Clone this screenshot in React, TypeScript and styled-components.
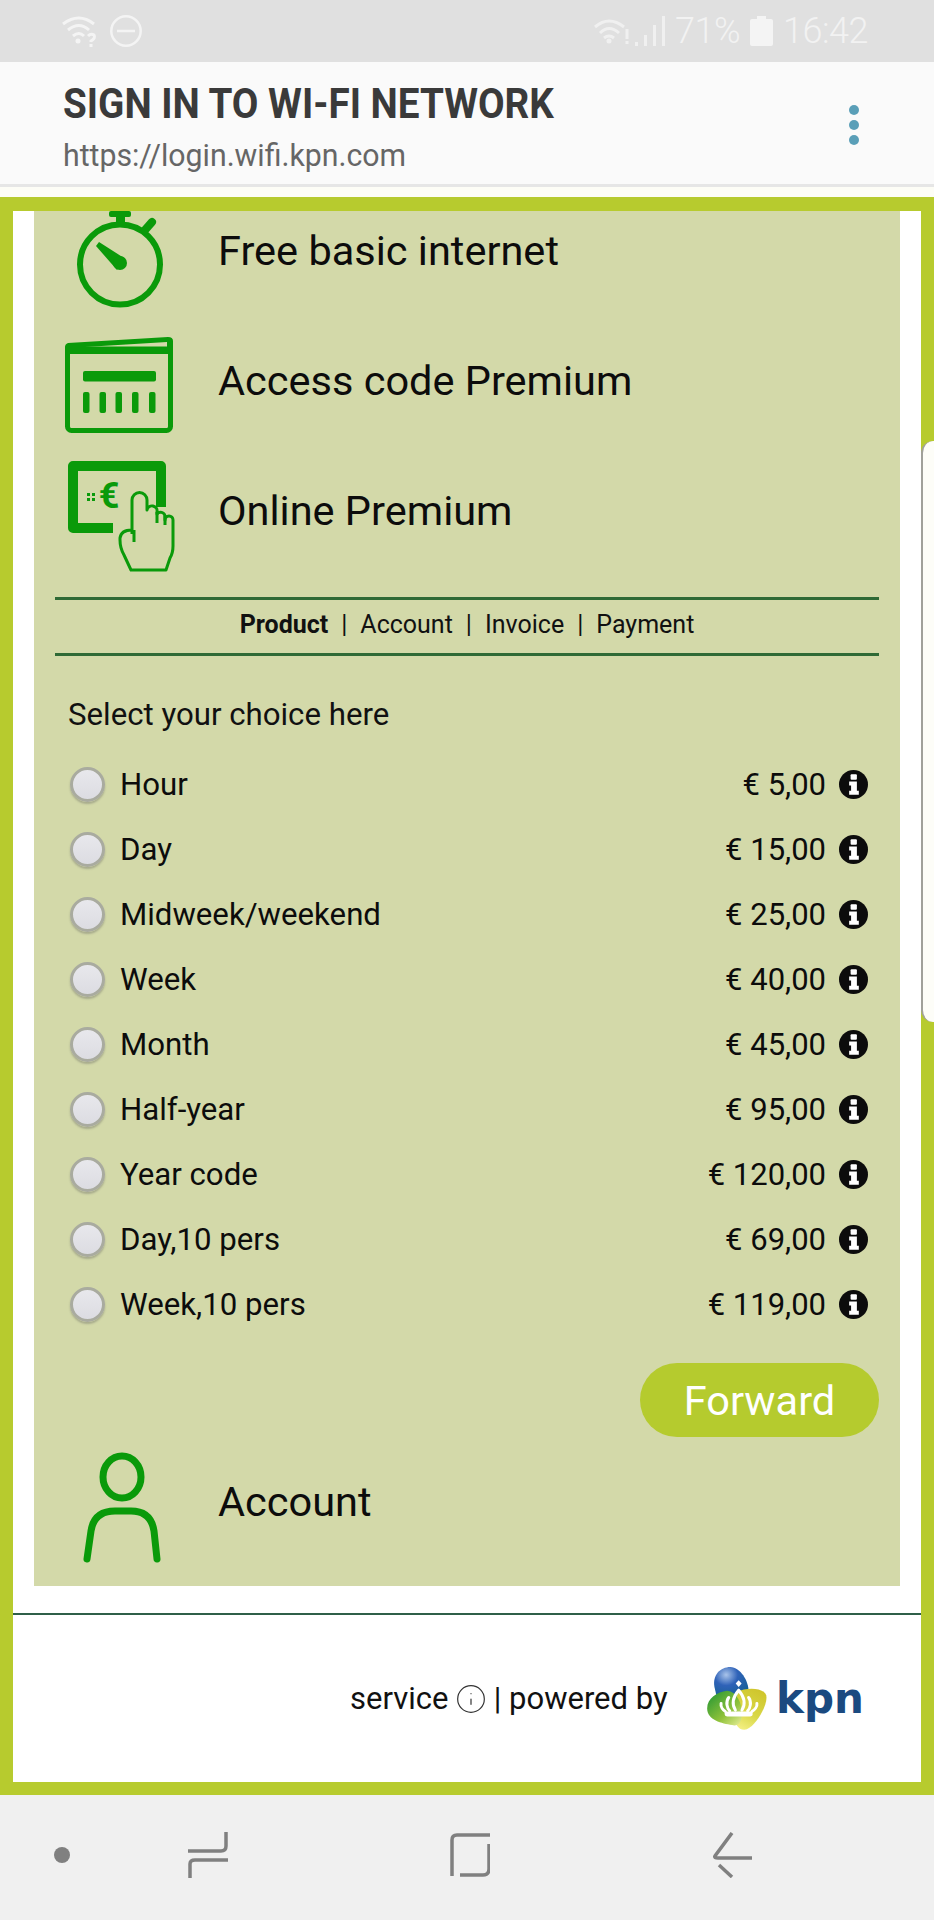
import { Info } from 'lucide-react';
import styled, { createGlobalStyle } from 'styled-components';

const GREEN = '#0a9a0a';
const PANEL = '#d3d9a9';
const LIME = '#b7cb2e';

const products = [
    { name: 'Hour', price: '€ 5,00' },
    { name: 'Day', price: '€ 15,00' },
    { name: 'Midweek/weekend', price: '€ 25,00' },
    { name: 'Week', price: '€ 40,00' },
    { name: 'Month', price: '€ 45,00' },
    { name: 'Half-year', price: '€ 95,00' },
    { name: 'Year code', price: '€ 120,00' },
    { name: 'Day,10 pers', price: '€ 69,00' },
    { name: 'Week,10 pers', price: '€ 119,00' },
];

const StopwatchIcon = () => (
    <svg width="130" height="130" viewBox="0 0 130 130">
        <circle cx="65" cy="78.5" r="40" fill="none" stroke={GREEN} strokeWidth="6" />
        <rect x="54" y="25" width="22" height="6" rx="2" fill={GREEN} />
        <rect x="61" y="28" width="9" height="10" fill={GREEN} />
        <line x1="90" y1="44" x2="97" y2="36" stroke={GREEN} strokeWidth="8" strokeLinecap="round" />
        <path d="M41 60 L44 56 L69 72 L62 84 Z" fill={GREEN} />
        <circle cx="65" cy="77" r="7" fill={GREEN} />
    </svg>
);

const WalletIcon = () => (
    <svg width="130" height="130" viewBox="0 0 130 130">
        <rect x="12.5" y="33" width="103" height="81.5" rx="4" fill="none" stroke={GREEN} strokeWidth="5" />
        <path d="M10 31 Q10 28 13 27 L113 21 Q118 21 118 25 L118 38 H10 Z M30 31 L112 32 L112 26 Z" fill={GREEN} fillRule="evenodd" />
        <rect x="28" y="55" width="73" height="10.5" rx="2" fill={GREEN} />
        {[28, 44.5, 60.5, 77, 94].map(x => (
            <rect key={x} x={x} y="76" width="6.5" height="21" rx="2" fill={GREEN} />
        ))}
    </svg>
);

const TouchIcon = () => (
    <svg width="130" height="130" viewBox="0 0 130 130">
        <path d="M58 82 H18 V20 H106 V61" fill="none" stroke={GREEN} strokeWidth="10" strokeLinejoin="round" />
        <text x="54" y="62" textAnchor="middle" fontFamily="Roboto, sans-serif" fontWeight="700" fontSize="36" fill={GREEN}>€</text>
        {[32, 37].map(x => [47, 52].map(y => (
            <rect key={`${x}-${y}`} x={x} y={y} width="3" height="3" fill={GREEN} />
        )))}
        <path
            d="M77 88 V54 a7.5 7.5 0 0 1 15 0 V64 a5 5 0 0 1 10 2 V68 a4.5 4.5 0 0 1 8 2 V74 a4 4 0 0 1 8 0 V100 q0 7 -3 12 l-4 12 H76 l-7 -15 q-4 -7 -4 -15 V92 q1 -8 12 -8"
            fill={PANEL}
            stroke={GREEN}
            strokeWidth="3"
            strokeLinejoin="round"
        />
        <path d="M79 84 V96 M102 66 V77 M110 70 V79" fill="none" stroke={GREEN} strokeWidth="3" />
    </svg>
);

const PersonIcon = () => (
    <svg width="130" height="130" viewBox="0 0 130 130">
        <ellipse cx="67" cy="40" rx="19" ry="21" fill="none" stroke={GREEN} strokeWidth="7" />
        <path d="M32 122 L36 94 Q39 74 60 74 H76 Q96 74 99 94 L102 122" fill="none" stroke={GREEN} strokeWidth="7" strokeLinecap="round" />
    </svg>
);

const InfoBadge = () => (
    <svg width="29" height="29" viewBox="0 0 30 30">
        <circle cx="15" cy="15" r="15" fill="#0c0c0c" />
        <rect x="12" y="4.5" width="6.5" height="5.5" rx="1" fill="#fff" />
        <path d="M10.5 12 H18.5 V21.5 H20.5 V25.5 H10.5 V21.5 H12.5 V16 H10.5 Z" fill="#fff" />
    </svg>
);

const KpnMark = () => (
    <svg width="60" height="63" viewBox="0 0 180 190">
        <defs>
            <radialGradient id="egg" cx="0.35" cy="0.25" r="0.85">
                <stop offset="0" stopColor="#a9c4ea" />
                <stop offset="0.4" stopColor="#2f62b8" />
                <stop offset="1" stopColor="#12608f" />
            </radialGradient>
            <linearGradient id="leaf" x1="0.1" y1="0.1" x2="0.9" y2="1">
                <stop offset="0" stopColor="#2f9a34" />
                <stop offset="0.6" stopColor="#8fc23a" />
                <stop offset="1" stopColor="#dfe98e" />
            </linearGradient>
            <linearGradient id="sun" x1="0.7" y1="0" x2="0.3" y2="1">
                <stop offset="0" stopColor="#cfc52c" />
                <stop offset="0.6" stopColor="#d9d848" />
                <stop offset="1" stopColor="#f2ee80" />
            </linearGradient>
        </defs>
        <path d="M22 60 C15 25 40 0 70 0 C100 2 125 40 125 75 L125 85 L30 95 Z" fill="url(#egg)" />
        <path d="M90 75 C120 60 170 62 178 85 C185 110 150 175 120 188 C95 195 80 170 82 140 Z" fill="url(#sun)" />
        <path d="M0 125 C0 95 30 75 60 72 C90 75 105 110 105 140 C105 170 90 180 75 175 C45 170 0 160 0 125 Z" fill="url(#leaf)" />
        <path d="M95 70 C78 90 73 110 85 130 M95 70 C112 90 117 110 105 130 M65 92 C55 105 60 125 68 132 M125 92 C135 105 130 125 122 132 M42 110 C40 120 48 130 55 134 M150 110 C152 120 142 130 135 134" fill="none" stroke="#fff" strokeWidth="9" strokeLinecap="round" />
        <path d="M60 142 H130" stroke="#fff" strokeWidth="15" strokeLinecap="round" />
        <path d="M95 40 L104 50 L95 60 L86 50 Z" fill="#fff" />
    </svg>
);

export default function App() {
    return (
        <>
            <GlobalStyle />
            <Page>
                <StatusBar>
                    <StatusGroup $gap={10}>
                        <svg width="38" height="32" viewBox="0 0 38 32" fill="none" stroke="#f4f4f4" strokeWidth="3">
                            <path d="M1 9 Q17 -3 32 9 M6 15 Q17 6 27 15 M11 21 Q17 16 22 21" />
                            <circle cx="16" cy="26" r="2.5" fill="#f4f4f4" stroke="none" />
                            <path d="M26 21 q3 -3 6 -1 q2 3 -3 6 v1 M29 29 v3" />
                        </svg>
                        <svg width="32" height="32" viewBox="0 0 32 32" fill="none" stroke="#f4f4f4" strokeWidth="2.5">
                            <circle cx="16" cy="16" r="14.7" />
                            <path d="M7 16 H25" />
                        </svg>
                    </StatusGroup>
                    <StatusGroup $gap={10}>
                        <svg width="36" height="26" viewBox="0 0 36 26" fill="none" stroke="#f0f0f0" strokeWidth="3">
                            <path d="M1 9 Q15 -3 30 9 M6 15 Q15 6 25 15 M10 20 Q15 16 20 20" />
                            <circle cx="15" cy="23" r="2.5" fill="#f0f0f0" stroke="none" />
                            <path d="M33 11 V21 M33 23 V26" />
                        </svg>
                        <SignalBars width="30" height="30" viewBox="0 0 30 30" fill="#f0f0f0">
                            <rect x="0" y="26" width="3" height="4" />
                            <rect x="9" y="19" width="3" height="11" />
                            <rect x="18" y="9" width="3" height="21" />
                            <rect x="27" y="0" width="3" height="30" />
                        </SignalBars>
                        <StatusText>71%</StatusText>
                        <svg width="23" height="30" viewBox="0 0 23 30" fill="#f4f4f4">
                            <rect x="7" y="0" width="9" height="4" />
                            <rect x="0" y="3" width="23" height="27" rx="2" />
                        </svg>
                        <StatusText>16:42</StatusText>
                    </StatusGroup>
                </StatusBar>
                <AppBar>
                    <TitleBlock>
                        <Title>SIGN IN TO WI-FI NETWORK</Title>
                        <Url>https://login.wifi.kpn.com</Url>
                    </TitleBlock>
                    <MenuDots>
                        <i /><i /><i />
                    </MenuDots>
                </AppBar>
                <Spacer />
                <Frame>
                    <Panel>
                        <PanelBody>
                            <Feature><StopwatchIcon /><FeatureLabel>Free basic internet</FeatureLabel></Feature>
                            <Feature><WalletIcon /><FeatureLabel>Access code Premium</FeatureLabel></Feature>
                            <Feature><TouchIcon /><FeatureLabel>Online Premium</FeatureLabel></Feature>
                            <Steps>
                                <b>Product</b><Sep>|</Sep>
                                <span>Account</span><Sep>|</Sep>
                                <span>Invoice</span><Sep>|</Sep>
                                <span>Payment</span>
                            </Steps>
                            <Lead>Select your choice here</Lead>
                            <Choices>
                                {products.map(p => (
                                    <Choice key={p.name}>
                                        <Radio type="radio" name="product" />
                                        <ChoiceName>{p.name}</ChoiceName>
                                        <Price>{p.price}</Price>
                                        <InfoBadge />
                                    </Choice>
                                ))}
                            </Choices>
                            <Actions>
                                <Forward>Forward</Forward>
                            </Actions>
                            <Feature><PersonIcon /><FeatureLabel>Account</FeatureLabel></Feature>
                        </PanelBody>
                    </Panel>
                    <Footer>
                        <FooterText>
                            service <ServiceInfo size={32} strokeWidth={0.9} color="#333" /> | powered by
                        </FooterText>
                        <Logo>
                            <KpnMark />
                            <LogoWord>kpn</LogoWord>
                        </Logo>
                    </Footer>
                </Frame>
                <EdgeHandle />
                <NavBar>
                    <NavDot />
                    <svg width="40" height="46" viewBox="0 0 40 46" fill="none" stroke="#808080" strokeWidth="3.5">
                        <path d="M38 0 V14 Q38 19 33 19 H0" />
                        <path d="M2 46 V32 Q2 28 7 28 H40" />
                    </svg>
                    <svg width="40" height="46" viewBox="0 0 40 46" fill="none" stroke="#808080" strokeWidth="3.5">
                        <path d="M2 44 V8 Q2 3 7 3 H40" />
                        <path d="M39 12 V37 Q39 43 33 43 H10" />
                    </svg>
                    <svg width="40" height="46" viewBox="0 0 40 46" fill="none" stroke="#808080" strokeWidth="3.5">
                        <path d="M20 1 L3 24 Q2 26 6 26 H40" />
                        <path d="M7 33 L20 45" />
                    </svg>
                </NavBar>
            </Page>
        </>
    );
}

const GlobalStyle = createGlobalStyle`
    html, body {
        margin: 0;
        padding: 0;
        overflow: hidden;
    }
    body {
        font-family: Roboto, "Liberation Sans", sans-serif;
        color: #111;
    }
`;

const Page = styled.div`
    position: relative;
    width: 934px;
    height: 1920px;
    display: flex;
    flex-direction: column;
    overflow: hidden;
`;

const StatusBar = styled.div`
    flex: 0 0 62px;
    box-sizing: border-box;
    padding: 0 66px 0 62px;
    background: #e0e0e0;
    display: flex;
    align-items: center;
    justify-content: space-between;
`;

const StatusGroup = styled.div<{ $gap: number }>`
    display: flex;
    align-items: center;
    gap: ${p => p.$gap}px;
`;

const SignalBars = styled.svg`
    margin-left: -5px;
`;

const StatusText = styled.span`
    font-size: 36px;
    font-weight: 300;
    color: #f2f2f2;
    letter-spacing: -0.5px;
`;

const AppBar = styled.div`
    flex: 0 0 125px;
    box-sizing: border-box;
    padding: 20px 75px 0 63px;
    background: #fafafa;
    border-bottom: 3px solid #e6e6e6;
    display: flex;
    justify-content: space-between;
`;

const TitleBlock = styled.div`
    display: flex;
    flex-direction: column;
    gap: 10px;
`;

const Title = styled.div`
    font-size: 42px;
    line-height: 44px;
    font-weight: 700;
    color: #3a3a3a;
    white-space: nowrap;
    transform: scaleX(0.92);
    transform-origin: left;
`;

const Url = styled.div`
    font-size: 32px;
    line-height: 38px;
    color: #666;
    white-space: nowrap;
    transform: scaleX(0.945);
    transform-origin: left;
`;

const MenuDots = styled.div`
    display: flex;
    flex-direction: column;
    gap: 5px;
    padding-top: 23px;

    i {
        display: block;
        width: 10px;
        height: 10px;
        border-radius: 50%;
        background: #5a9fb8;
    }
`;

const Spacer = styled.div`
    flex: 0 0 10px;
    background: #fdfdf6;
`;

const Frame = styled.div`
    flex: 0 0 1598px;
    box-sizing: border-box;
    border: 13px solid ${LIME};
    border-top-width: 14px;
    background: #fff;
    display: flex;
    flex-direction: column;
`;

const Panel = styled.div`
    flex: 0 0 1375px;
    margin: 0 21px;
    background: ${PANEL};
    overflow: hidden;
`;

const PanelBody = styled.div`
    margin-top: -25px;
    padding: 0 21px;
`;

const Feature = styled.div`
    height: 130px;
    display: flex;
    align-items: center;
    gap: 33px;
`;

const FeatureLabel = styled.div`
    padding-bottom: 2px;
    font-size: 41.5px;
    color: #0c0c0c;
`;

const Steps = styled.div`
    margin-top: 21px;
    height: 49px;
    padding-bottom: 4px;
    border-top: 3px solid #2f6a36;
    border-bottom: 3px solid #2f6a36;
    display: flex;
    align-items: center;
    justify-content: center;
    font-size: 25px;
`;

const Sep = styled.span`
    margin: 0 13px;
`;

const Lead = styled.div`
    margin: 41px 0 0 13px;
    font-size: 31.2px;
    line-height: 36px;
`;

const Choices = styled.div`
    margin-top: 19px;
`;

const Choice = styled.label`
    height: 65px;
    padding: 0 11px 0 15px;
    display: flex;
    align-items: center;
`;

const Radio = styled.input`
    appearance: none;
    margin: 0;
    flex: 0 0 35px;
    height: 35px;
    box-sizing: border-box;
    border-radius: 50%;
    border: 3px solid #a9ab9f;
    background: linear-gradient(#e8e8ec, #dcdce2);
    box-shadow: 0 2px 2px rgba(90, 90, 90, 0.35);
`;

const ChoiceName = styled.span`
    margin-left: 15px;
    flex: 1;
    font-size: 31.2px;
    color: #0c0c0c;
`;

const Price = styled.span`
    margin-right: 13px;
    font-size: 31px;
    color: #0c0c0c;
`;

const Actions = styled.div`
    margin-top: 26px;
    display: flex;
    justify-content: flex-end;
`;

const Forward = styled.button`
    width: 239px;
    height: 74px;
    border: 0;
    border-radius: 37px;
    background: #b5cb2e;
    color: #fff;
    font-family: Roboto, sans-serif;
    font-size: 41.5px;
`;

const Footer = styled.div`
    margin-top: 27px;
    flex: 1;
    border-top: 2px solid #2f5f48;
    padding: 0 57px 0 337px;
    display: flex;
    align-items: center;
    justify-content: space-between;
`;

const FooterText = styled.div`
    font-size: 31px;
    display: flex;
    align-items: center;
    white-space: pre;
`;

const ServiceInfo = styled(Info)`
    margin: 0 -1px;
`;

const Logo = styled.div`
    display: flex;
    align-items: center;
    gap: 9px;
`;

const LogoWord = styled.span`
    font-family: "DejaVu Sans", sans-serif;
    font-size: 42px;
    font-weight: 700;
    color: #1b4a80;
`;

const EdgeHandle = styled.div`
    position: absolute;
    left: 921px;
    top: 441px;
    width: 13px;
    height: 581px;
    box-sizing: border-box;
    background: #fdfdf8;
    border-left: 2px solid #a0a09a;
    border-radius: 12px 0 0 12px;
`;

const NavBar = styled.div`
    flex: 1;
    box-sizing: border-box;
    padding: 37px 0 0 54px;
    background: #f0f0f0;
    display: flex;
    align-items: flex-start;
    gap: 222px;

    svg:first-of-type {
        margin-left: -104px;
    }
`;

const NavDot = styled.div`
    width: 16px;
    height: 16px;
    margin-top: 15px;
    border-radius: 50%;
    background: #808080;
`;
